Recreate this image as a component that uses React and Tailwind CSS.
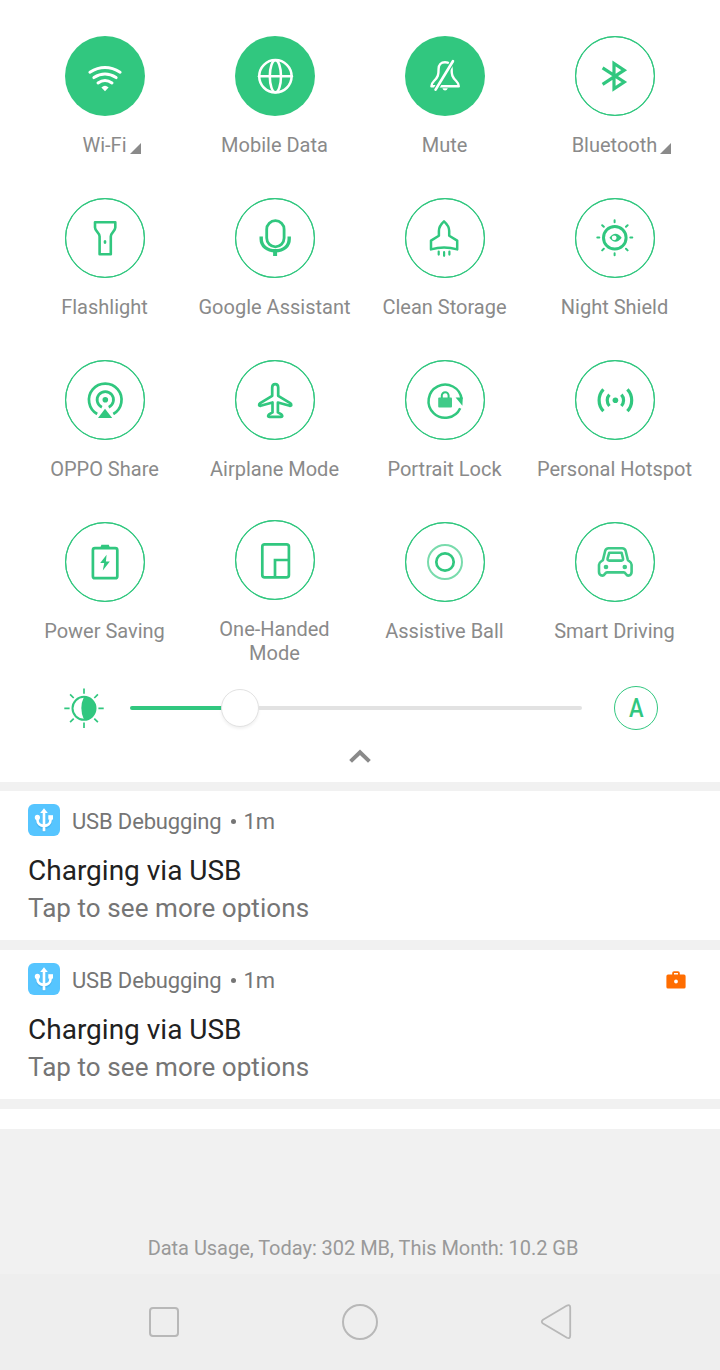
import React from "react";

const Wifi = () => (
  <g strokeWidth="3">
    <path d="M24.9 36.2Q40 27 55.1 36.2" />
    <path d="M28.9 41.6Q40 34.6 51.1 41.6" />
    <path d="M33 47Q40 42.1 47 47" />
    <path d="M36.4 51.4Q40 48.2 43.6 51.4L40 55.2Z" fill="currentColor" stroke="none" />
  </g>
);

const Globe = () => (
  <g strokeWidth="2.5">
    <circle cx="40.4" cy="40.3" r="16.2" />
    <ellipse cx="40.4" cy="40.3" rx="5.6" ry="16" />
    <path d="M24 40.3H56.8" />
  </g>
);

const Mute = () => (
  <g strokeWidth="2.4">
    <path d="M40 26.2C36 26.2 33.6 29 33.6 32.8C33.6 39 33 41 29 45C27.2 46.8 26.4 48 26.4 50.2H53.8C53.8 48 53 46.8 51.2 45C47.2 41 46.6 39 46.6 32.8C46.6 29 44 26.2 40 26.2Z" />
    <path d="M47.4 26L31 53" strokeWidth="5" className="text-[#31c77f]" stroke="currentColor" strokeLinecap="butt" />
    <path d="M47.9 25.2L30.6 53.6" strokeWidth="2.7" strokeLinecap="round" />
    <path d="M37.4 52.2H42.8Q42 54.4 40.1 54.4T37.4 52.2Z" fill="currentColor" stroke="none" />
  </g>
);

const Bluetooth = () => (
  <path strokeWidth="3.2" strokeLinecap="butt" strokeLinejoin="miter" d="M27.6 31.9L49.2 46L39 52.8V27.4L49.2 34.2L27.6 48.3" />
);

const Flashlight = () => (
  <g strokeWidth="2.6">
    <path d="M30 24.2H50.3V29.6C50.3 33.4 45.8 34.6 45.8 38.6V56.2H34.6V38.6C34.6 34.6 30 33.4 30 29.6Z" />
    <ellipse cx="40" cy="44" rx="1.4" ry="2" fill="currentColor" stroke="none" />
  </g>
);

const Mic = () => (
  <g strokeWidth="2.8">
    <rect x="31.7" y="22.6" width="17.4" height="26.2" rx="8.7" />
    <path strokeWidth="3.4" strokeLinecap="butt" d="M26.2 38.6V41C26.2 48 32 52.8 40.4 52.8S54.2 48 54.2 41V38.6" />
    <path strokeWidth="4" strokeLinecap="butt" d="M40.1 53V58" />
  </g>
);

const Rocket = () => (
  <g strokeWidth="2.5">
    <path d="M39 23.4C35.4 26.6 33.9 29.6 33.9 33V37.8L26 42.6V51.4Q39 47.7 52.2 51.4V42.6L44.2 37.8V33C44.2 29.6 42.6 26.6 39 23.4Z" />
    <path strokeWidth="2.2" d="M33.7 53.6V56.6M39.1 54.2V57.8M44.4 53.6V56.6" />
  </g>
);

const NightShield = () => (
  <g strokeWidth="3">
    <circle cx="39.8" cy="39.8" r="11.3" />
    <path strokeWidth="2" d="M39.6 22.3V24.3M39.6 55.3V57.3M22.3 39.6H24.3M55.3 39.6H57.3M27.2 27.2L28.8 28.8M51 28.8L52.6 27.2M27.2 52.4L28.8 50.8M51 50.8L52.6 52.4" />
    <path fill="currentColor" fillRule="evenodd" stroke="none" d="M34.4 39.8Q40.5 31.8 46.7 39.8Q40.5 47.8 34.4 39.8ZM39.2 37.4A2.4 2.4 0 1 0 39.2 42.2A2.4 2.4 0 1 0 39.2 37.4Z" />
  </g>
);

const OppoShare = () => (
  <g strokeWidth="2.7" strokeLinecap="butt">
    <path d="M32.2 54A16.3 16.3 0 1 1 48.3 54" />
    <path d="M36.9 47.2A8.2 8.2 0 1 1 43.7 47.2" />
    <circle cx="40.3" cy="39.7" r="2.8" fill="currentColor" stroke="none" />
    <path d="M40 48.8L47.2 58H33Z" fill="currentColor" stroke="none" />
  </g>
);

const Airplane = () => (
  <path
    strokeWidth="2.7"
    d="M40.2 24.1C38 24.1 37.2 25.8 37.2 27.6V35.8L25.2 43.1C23.6 44.3 23.8 46.1 25.6 45.8L37.5 42.5V52.4L34 54.4C32.6 55.8 33 56.8 34.3 56.8H46.1C47.4 56.8 47.8 55.8 46.4 54.4L42.9 52.4V42.5L54.8 45.8C56.6 46.1 56.8 44.3 55.2 43.1L43.2 35.8V27.6C43.2 25.8 42.4 24.1 40.2 24.1Z"
  />
);

const PortraitLock = () => (
  <g strokeWidth="2.5" strokeLinecap="butt">
    <path d="M55.2 48.2A16.6 16.6 0 1 1 56.6 39" />
    <path d="M50.6 37.6H57.8L57.4 45.8Z" fill="currentColor" stroke="none" />
    <rect x="33.2" y="37.6" width="13.8" height="9.8" rx="1" fill="currentColor" stroke="none" opacity=".92" />
    <path strokeWidth="2" d="M36.8 38V35.6A3.4 3.4 0 0 1 43.6 35.6V38" />
  </g>
);

const Hotspot = () => (
  <g strokeWidth="3.2" strokeLinecap="butt">
    <path d="M28.4 29.4A16 16 0 0 0 28.4 51.2M52.4 29.4A16 16 0 0 1 52.4 51.2" />
    <path d="M34.4 34.6A8.6 8.6 0 0 0 34.4 46M46.4 34.6A8.6 8.6 0 0 1 46.4 46" />
    <circle cx="40.4" cy="40.3" r="2.8" fill="currentColor" stroke="none" />
  </g>
);

const Battery = () => (
  <g strokeWidth="2.7">
    <rect x="27.9" y="26.2" width="24.4" height="30" rx="2" />
    <path d="M36.4 22.7H43.8L45 26H35.2Z" fill="currentColor" stroke="none" />
    <path d="M41.6 32.8L35.2 41H39.2L37.8 48.6L44.8 39.6H40.9Z" fill="currentColor" stroke="none" />
  </g>
);

const OneHanded = () => (
  <g strokeWidth="2.7">
    <rect x="27.3" y="24.4" width="26.6" height="33" rx="2.4" />
    <path strokeLinejoin="miter" strokeLinecap="butt" d="M53.5 40H40V57" />
  </g>
);

const AssistiveBall = () => (
  <g>
    <circle cx="40" cy="40" r="17" strokeWidth="2" opacity=".65" />
    <circle cx="40" cy="40" r="8.7" strokeWidth="2.7" />
  </g>
);

const Car = () => (
  <g strokeWidth="2.6" opacity=".93">
    <path d="M33.6 26.2C31.8 26.2 30.6 27.2 30.2 28.8L28 37.8C27.6 39 24 39.6 24 42.8V50C24 51.6 25 53.6 27.4 53.6C29.8 53.6 30 50.4 32 50.4H48.8C50.8 50.4 51 53.6 53.2 53.6C55.6 53.6 56.6 51.6 56.6 50V42.8C56.6 39.6 53.2 39 52.8 37.8L50.6 28.8C50.2 27.2 49 26.2 47.2 26.2Z" />
    <path d="M34.2 30.8H46.6L48 36.4Q48.4 38.6 46.4 38.6H34.2Q32.2 38.6 32.6 36.4Z" />
    <circle cx="31" cy="45" r="2.3" fill="currentColor" stroke="none" />
    <circle cx="49.8" cy="45" r="2.3" fill="currentColor" stroke="none" />
  </g>
);

const tiles = [
  { label: "Wi-Fi", icon: Wifi, on: true, expandable: true },
  { label: "Mobile Data", icon: Globe, on: true },
  { label: "Mute", icon: Mute, on: true },
  { label: "Bluetooth", icon: Bluetooth, expandable: true },
  { label: "Flashlight", icon: Flashlight },
  { label: "Google Assistant", icon: Mic },
  { label: "Clean Storage", icon: Rocket },
  { label: "Night Shield", icon: NightShield },
  { label: "OPPO Share", icon: OppoShare },
  { label: "Airplane Mode", icon: Airplane },
  { label: "Portrait Lock", icon: PortraitLock },
  { label: "Personal Hotspot", icon: Hotspot },
  { label: "Power Saving", icon: Battery },
  { label: "One-Handed Mode", icon: OneHanded, wrap: true },
  { label: "Assistive Ball", icon: AssistiveBall },
  { label: "Smart Driving", icon: Car },
];

function Tile({ label, icon: Icon, on, expandable, wrap }) {
  return (
    <button className={"flex h-[162px] flex-col items-center " + (wrap ? "-mt-[2px]" : "")}>
      <span
        className={
          "block size-20 shrink-0 rounded-full " +
          (on ? "bg-[#31c77f] text-white" : "border border-[#31c77f] text-[#31c77f]")
        }
      >
        <svg
          viewBox="0 0 80 80"
          className={on ? "size-20" : "-m-px size-20"}
          fill="none"
          stroke="currentColor"
          strokeLinejoin="round"
          strokeLinecap="round"
        >
          {!on && <circle cx="40" cy="40" r="39.4" strokeWidth="1.2" />}
          <Icon />
        </svg>
      </span>
      <span
        className={
          "relative mt-[17px] mr-px text-center text-[20px] leading-6 text-[#8a8a8a] " +
          (wrap ? "w-[120px]" : "whitespace-nowrap")
        }
      >
        {label}
        {expandable && (
          <svg viewBox="0 0 11 11" className="absolute -right-[14px] bottom-[3px] size-[11px] fill-[#8a8a8a]">
            <path d="M11 0V11H0Z" />
          </svg>
        )}
      </span>
    </button>
  );
}

function Brightness() {
  return (
    <div className="flex h-11 items-center pl-16">
      <svg viewBox="0 0 40 40" className="size-10 text-[#31c77f]" fill="none" stroke="currentColor">
        <circle cx="20" cy="20.3" r="11.5" strokeWidth="2" />
        <path d="M20 8.8Q14.6 20.3 20 31.8A11.5 11.5 0 0 0 20 8.8Z" fill="currentColor" stroke="none" />
        <path
          strokeWidth="1.7"
          d="M20 .5V5.8M20 34.6V39.9M.3 20.3H5.6M34.4 20.3H39.7M6.1 6.4L9.7 10M30.3 10L33.9 6.4M6.1 34.2L9.7 30.6M30.3 30.6L33.9 34.2"
        />
      </svg>
      <div className="ml-[26px] flex w-[452px] items-center">
        <div className="h-1 w-[92px] rounded-l-full bg-[#31c77f]" />
        <div className="-ml-px size-[38px] shrink-0 rounded-full border border-[#e2e2e2] bg-white shadow-[0_2px_3px_rgba(0,0,0,0.06)]" />
        <div className="h-1 flex-1 rounded-r-full bg-[#e2e2e2]" />
      </div>
      <div className="ml-8 flex size-11 items-center justify-center rounded-full border-[1.3px] border-[#31c77f] text-[25px] font-medium leading-none text-[#31c77f]">
        <span className="scale-x-[0.88]">A</span>
      </div>
    </div>
  );
}

function UsbIcon() {
  return (
    <svg viewBox="0 0 32 32" className="size-8 rounded-[6px] bg-[#56c5ff]" fill="none" stroke="white">
      <g stroke="#36a5e0" opacity=".45" transform="translate(0 .8)">
        <path strokeWidth="3" d="M16 7V27.4M9.3 14V16.4C9.3 20.4 12.5 22.4 16 22.6C19.5 22.4 22.7 20.4 22.7 16.4V13" />
      </g>
      <path strokeWidth="2.7" d="M16 7V27.2M9.4 13.5V15.6C9.4 19.6 12.5 21.8 16 22C19.5 21.8 22.6 19.6 22.6 15.6V13" />
      <path d="M16 4.2L19.8 9H12.2Z" fill="white" stroke="none" />
      <circle cx="9.4" cy="13.4" r="2.6" fill="white" stroke="none" />
      <rect x="20.3" y="11.2" width="4.7" height="4.4" fill="white" stroke="none" />
    </svg>
  );
}

function Notification({ work }) {
  return (
    <article className="h-[149px] bg-white px-7 pt-[13px]">
      <header className="flex h-8 items-center text-[22px] text-[#757575]">
        <UsbIcon />
        <span className="ml-3 mt-[2px] tracking-[-0.16px]">USB Debugging</span>
        <span className="ml-[9px] mr-2 mt-[2px] size-[5px] rounded-full bg-[#757575]" />
        <span className="mt-[2px] tracking-[-0.16px]">1m</span>
        {work && (
          <svg viewBox="0 0 20 18" className="ml-auto mr-[6px] mt-px h-[18px] w-5">
            <path
              fill="#ff6d00"
              fillRule="evenodd"
              d="M6.2 3.6V2Q6.2 .2 8 .2H12Q13.8 .2 13.8 2V3.6H18Q19.6 3.6 19.6 5.2V16Q19.6 17.6 18 17.6H2Q.4 17.6 .4 16V5.2Q.4 3.6 2 3.6ZM8 3.6H12V2H8ZM10 8.6A1.9 1.9 0 1 0 10 12.4A1.9 1.9 0 1 0 10 8.6Z"
            />
          </svg>
        )}
      </header>
      <h2 className="mt-[18px] text-[28px] leading-[34px] text-[#212121]">Charging via USB</h2>
      <p className="mt-1 text-[26px] leading-8 tracking-[0.07px] text-[#757575]">Tap to see more options</p>
    </article>
  );
}

export default function App() {
  return (
    <div className="flex h-[1370px] w-[720px] flex-col overflow-hidden bg-[#f1f1f1] font-[Roboto,sans-serif]">
      <section className="h-[782px] bg-white pt-9">
        <div className="mx-5 grid h-[650px] auto-rows-[162px] grid-cols-4">
          {tiles.map((t) => (
            <Tile key={t.label} {...t} />
          ))}
        </div>
        <Brightness />
        <div className="mt-[18px] flex justify-center">
          <svg viewBox="0 0 24 16" className="h-4 w-6" fill="none" stroke="#8a8a8a" strokeWidth="4">
            <path d="M2.6 13.4L12 4.2L21.4 13.4" />
          </svg>
        </div>
      </section>
      <div className="mt-[9px]">
        <Notification />
      </div>
      <div className="mt-[10px]">
        <Notification work />
      </div>
      <div className="mt-[10px] h-5 bg-white" />
      <footer className="flex h-[145px] items-end justify-center pb-[14px] pl-[6px] text-[20px] leading-6 tracking-[-0.03px] text-[#999999]">
        Data Usage, Today: 302 MB, This Month: 10.2 GB
      </footer>
      <nav className="flex h-24 items-center justify-between bg-[#eeeeee] pl-[149px] pr-[148px]">
        <div className="size-[30px] rounded-[4px] border-2 border-[#b8b8b8]" />
        <div className="size-9 rounded-full border-2 border-[#b8b8b8]" />
        <svg viewBox="0 0 32 36" className="h-9 w-8" fill="none" stroke="#b8b8b8" strokeWidth="1.8" strokeLinejoin="round">
          <path d="M27 1.6Q30 .2 30.2 3.4V31.6Q30 35.2 27 33.8L3 19.6Q.6 17.7 3 15.8Z" />
        </svg>
      </nav>
    </div>
  );
}
